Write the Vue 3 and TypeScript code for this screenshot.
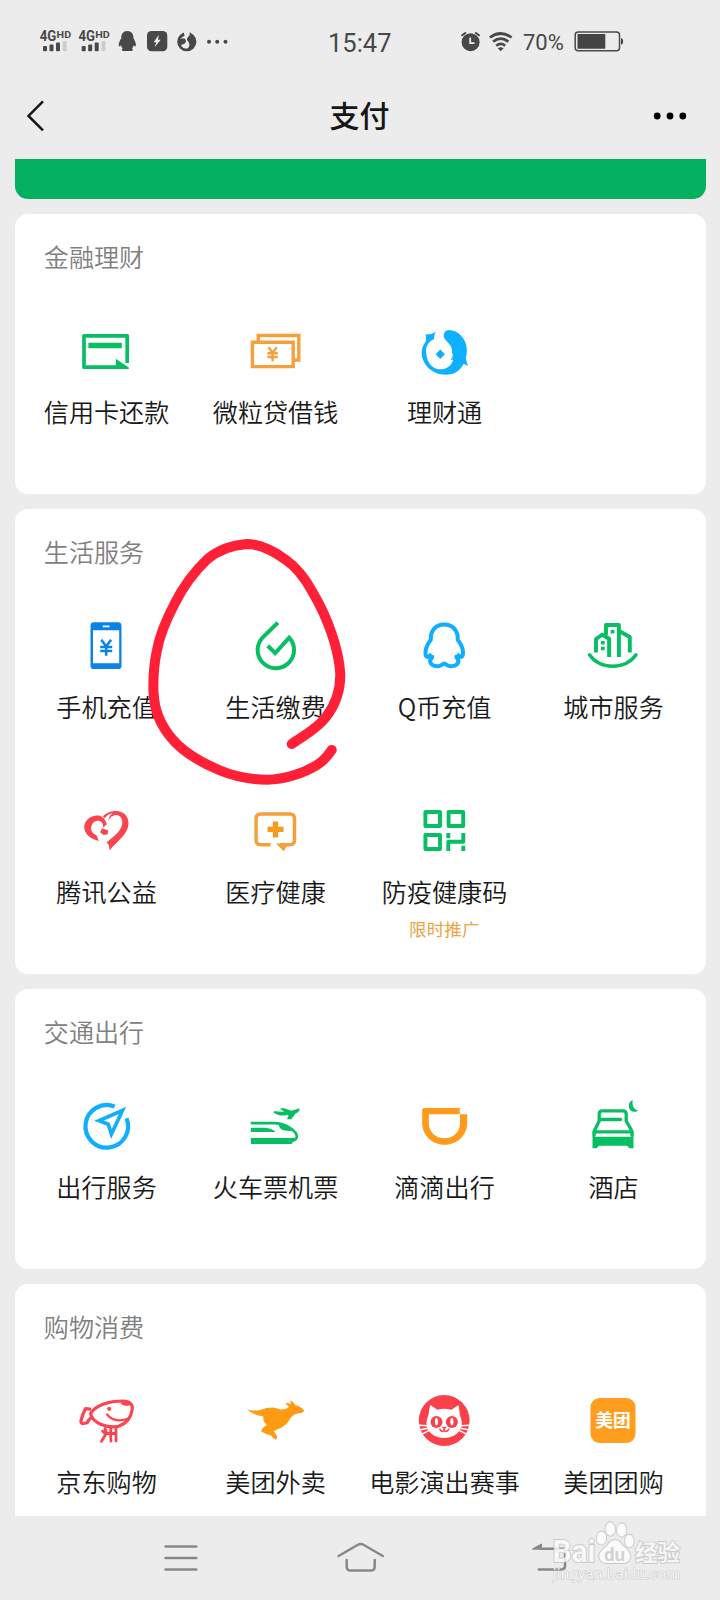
<script setup lang="ts">
interface Service {
  label: string
  icon: string
  note?: string
}
interface Section {
  title: string
  services: Service[]
}

const GREEN = '#07bf62'
const ORANGE = '#f5a03a'
const BLUE = '#10aeff'
const RED = '#fa4450'

const icons: Record<string, string> = {
  card: `<path d="M53.2 43V15.8H10V47.2H48" fill="none" stroke="${GREEN}" stroke-width="3.7" stroke-linejoin="round"/>
    <path d="M14.4 22.8h33.4v5.4H14.4zM41.8 38.8 54.8 47.5V49H41.8z" fill="${GREEN}"/>`,
  bills: `<g fill="none" stroke="${ORANGE}" stroke-width="3.4"><path d="M9.4 22.2h40.8v24.4H9.4zM15.3 20.5v-5h40.5v24.6h-5"/>
    <path d="m25.5 27.2 4.1 5.6 4.1-5.6M29.6 32.5v8.7M24.4 33.2h10.4M24.4 37h10.4" stroke-width="2.4"/></g>`,
  fish: `<path fill="#0fb0ff" d="M13.6 14.3Q19.5 15 24.3 11.6Q22 14 22.1 19C15.5 22.5 13.7 27 14.1 32.5C14.8 42 20 49.3 28 49.3C34.5 49.3 39.5 46 41.2 39.5L38.6 40Q41.5 36.5 40.8 33L40 34Q40.8 28 37.2 24C34.5 20.5 31.7 19 31.7 15.8C31.7 12.8 33.5 10 37 10C46 10.3 54.5 18.5 54.8 29Q55 35 53.8 38.5L55.9 46L51.7 43.7C48 51 42 54.7 34 54.7C20 54.5 9.7 45 9.7 32Q9.9 26 13.8 21.8Q14.5 17.5 13.6 14.3Z"/>
    <path fill="${BLUE}" d="m28.3 29.6 4.6 4.7-4.6 4.7-4.6-4.7z"/>`,
  phone: `<rect x="16.5" y="7.3" width="31" height="46.8" rx="3.4" fill="#0b83e6"/><path fill="#fff" d="M19 15.3h26.2v33H19zM28.8 10.5h6.7v1.7h-6.7z"/>
    <path d="m27.3 24.7 4.9 6.6 4.9-6.6M32.2 31v9.8M26.2 32h12M26.2 36h12" fill="none" stroke="#0b83e6" stroke-width="2.5"/>`,
  drop: `<path d="M33.4 9 18.8 23.4A18.2 18.2 0 1 0 46.2 22.6L32.2 38.2 26.2 32.2" fill="none" stroke="${GREEN}" stroke-width="4" stroke-linecap="square" stroke-linejoin="miter"/>`,
  penguin: `<path d="M32.2 9.6C23.5 9.6 18.2 16 18.8 24.8C14.5 30 12.2 37 14.2 41.3C15.5 42.8 17.5 41 19.5 39.2M19.8 40.5C20.5 42.5 20 43.2 18.8 43.8C16 49 22 51.5 26.5 51.2C29.5 51 31 48.6 32.2 48.6C33.4 48.6 35 51 38 51.2C42.5 51.5 48.5 49 45.7 43.8C44.5 43.2 44 42.5 44.7 40.5M45 39.2C47 41 49 42.8 50.3 41.3C52.3 37 50 30 45.7 24.8C46.3 16 41 9.6 32.2 9.6" fill="none" stroke="${BLUE}" stroke-width="4" stroke-linejoin="round"/>`,
  city: `<g fill="none" stroke="${GREEN}" stroke-width="3.9" stroke-linejoin="round"><path d="M8.5 39.8C19 55 44.5 55 55 39.8" stroke-linecap="round" stroke-width="3.4"/>
    <path d="M15 37.5V24l6.3-4.3 6.8 4V42M25 20V10h12.9V42M38 16l10.8 6v15.6"/></g><path fill="${GREEN}" d="M19.9 25.9h3.8v3.6h-3.8zM19.9 31.7h3.8v3.6h-3.8zM29.6 14.9h3.8v3.6h-3.8z"/>`,
  heart: `<path fill="${RED}" d="M32.8 24.2C31 17.5 27 15.2 22.2 15.5C15.5 16 10 21 10.3 27.5C10.7 34.5 16.5 38.7 24.8 41L22.6 35.4C18 33 16.3 29.8 17.4 26.5C18.4 22.5 21 20.3 24.5 20.8C28 21.3 29.4 24 29.2 27.8Z"/>
    <path fill="${RED}" d="m28.2 28.2 6 2.2-.6 4.2-4.4.2-3.1-2.6z"/>
    <path fill="${RED}" d="M28.8 16.5C32 12.7 38 10.6 43 11C50 11.5 54.5 16.5 54.5 23C54.5 34.5 43 41 36 50.2C34.6 47 35.5 44 32.5 42.5C39 37 47 31.5 48.2 24C49 18.5 46.3 15.3 42.3 14.9C39 14.7 36.2 17 34.2 20.8C34.5 17.5 36.5 14.5 38.8 13.2C35 13.6 32.5 15.2 31 18.2Z"/>`,
  medical: `<path d="M27.5 44.7H17.8q-4.7 0-4.7-4.7V18.7q0-4.7 4.7-4.7h29q4.7 0 4.7 4.7V40q0 4.7-4.7 4.7H37" fill="none" stroke="${ORANGE}" stroke-width="3.5"/>
    <path fill="${ORANGE}" d="M33 43.4H46.2L40.5 51.3z"/><path d="M24.5 29.4h16M32.5 21.4v16" stroke="#f79a1f" stroke-width="5.2"/>`,
  qr: `<g fill="none" stroke="${GREEN}" stroke-width="3.9" stroke-linejoin="round"><path d="M13.4 12h14.6v14H13.4zM36.6 12h14.6v14H36.6zM13.4 35h14.6v14H13.4z"/>
    <path d="M36.3 33v5.2M51.3 33v8.8H36.3V51M51.3 45.7V51"/></g>`,
  compass: `<path d="M40.8 11.6A21.3 21.3 0 1 0 52.5 23.3" fill="none" stroke="${BLUE}" stroke-width="4.2"/>
    <path d="M48.5 15.5 25 25.6 34.2 29.2 37.4 39Z" fill="none" stroke="${BLUE}" stroke-width="3.7" stroke-linejoin="miter"/>`,
  train: `<path d="M7.8 28.2H31C43 28.2 53.8 36.5 53.8 41.5C53.8 44 52 45 49 45.8" fill="none" stroke="${GREEN}" stroke-width="2.7"/>
    <path fill="${GREEN}" d="M7.8 43H52.5L48.5 49H7.8zM7.8 32.7H22Q29 33 32.5 37.1H7.8zM35.8 29.5C36 34 40 36.5 49.5 35.8Q44 31 35.8 29.5zM30.4 17.4Q31.5 15.2 34 16.4L41.2 16.8 36.8 13.8 40.3 12.9 48.5 15.8 56.4 13.2Q57.4 16.4 52.5 18.6L48.3 24.2 44 24.2 45.5 20.1Q35.5 21.6 30.4 17.4z"/>`,
  didi: `<path fill="#ff9a1a" d="M12 13H47.8V19.3H55.2V28C55.2 40 45.5 49.8 32.5 49.8C20 49.8 10.2 40 10.2 28V14.8Q10.2 13 12 13ZM16.8 19.3V28C16.8 37 23.5 43.3 32.5 43.3C41.5 43.3 48 37 48 28V19.3Z"/>`,
  hotel: `<path d="M13.2 40V36L18.2 26V19Q18.2 15.9 21.3 15.9H42Q45.2 15.9 45.2 19V26L50.9 36V40M19 24.5H39.5M13 36.8H51" fill="none" stroke="${GREEN}" stroke-width="3.3" stroke-linecap="round" stroke-linejoin="round"/>
    <path fill="${GREEN}" d="M11.5 36V53.3H15.5L18 50.8H46L48.5 53.3H52.5V36L50.3 41.7H14Z"/><path fill="${GREEN}" d="M51.7 5C44 8.5 48.5 20.8 57.6 15.6C53.2 15.1 50.7 10.4 51.7 5Z"/>`,
  dog: `<g fill="none" stroke="${RED}" stroke-width="3.2" stroke-linecap="round" stroke-linejoin="round"><path d="M16.5 23.5C22 15 35 11 49 11C55.5 11 59 14.5 58.2 19.5C57 28 51.5 34 44.5 36.3C34 38.5 18.5 33.5 16.5 23.5Z"/>
    <path d="M15.8 19.2L11.5 18.6Q8.5 24.5 6.9 31Q6.8 33.8 9.5 33.5L13.2 32.8Q14 30.5 16.8 28"/><path d="M33.2 24.5C38 31 47 31.5 53.8 28.8" stroke-width="2.3"/>
    <path d="M31 38.5l1.5 4.5-5 8.2M37 38l-.5 5 .5 8M42 38V51M32 43.5H41.5M28.5 41l2.5 2.5" stroke-width="2.8"/></g><circle cx="35.2" cy="18.8" r="2.1" fill="${RED}"/><path fill="${RED}" d="M46 13Q52 9.5 58 14.5Q50.5 18 46 13z"/>`,
  kangaroo: `<path fill="#ff9a12" d="M3.5 19.3Q10 21.5 17.5 20Q29 15.5 36.5 19.2Q42 20.5 46.2 16.8L42.3 13.6Q44 12.3 48 14.3L47 10.7Q50.5 11.5 52.2 15.2Q57 15.8 61 20.2Q61 23 55.5 23.2Q50 24 47.3 28.5Q43.5 36.5 33.5 39.8L30.8 41.2L34.2 46.5L33.2 50Q30 48.7 28.2 45.5Q23 44.3 18.5 41.8Q18.3 38 23.8 35Q19.5 31.5 20.4 26.4Q11 25.5 3.5 19.3Z"/>`,
  cat: `<circle cx="32.2" cy="30.5" r="25.4" fill="#fb3f4b"/><path fill="#fff" d="M18.3 15 25.5 19.7Q32.2 18 39.5 19.7L46.5 15Q47.5 20 47.8 25Q52 34 47.8 40.5Q42 48 32.2 48Q22 48 16.5 40.5Q12.3 33.5 16.5 25Q16.8 20 18.3 15Z"/>
    <g fill="#fb3f4b"><circle cx="24.5" cy="32.1" r="6"/><circle cx="39.9" cy="32.1" r="6"/><path d="M29.8 37h5l-2.5 2.8z"/></g><g fill="#fff"><ellipse cx="24.5" cy="31.6" rx="1.6" ry="3.8"/><ellipse cx="39.9" cy="31.6" rx="1.6" ry="3.8"/></g>
    <path d="M32.3 39v1.5M27.5 38.5Q29.5 43 32.3 40.5Q35 43 37 38.5" fill="none" stroke="#fb3f4b" stroke-width="1.6"/>
    <path d="M6.5 35.2l9 .6M8.2 39.8l9-1.8M10.5 43.8l7.5-4M57.9 35.2l-9 .6M56.2 39.8l-9-1.8M53.9 43.8l-7.5-4" stroke="#fff" stroke-width="1.5"/>`,
  meituan: `<rect x="9.5" y="8" width="45" height="45" rx="9" fill="#ff9d1e"/><text x="32" y="36.9" text-anchor="middle" font-size="17.8" font-weight="700" fill="#fff" font-family="'Noto Sans CJK SC', sans-serif">美团</text>`,
}

const sections: Section[] = [
  {
    title: '金融理财',
    services: [
      { label: '信用卡还款', icon: 'card' },
      { label: '微粒贷借钱', icon: 'bills' },
      { label: '理财通', icon: 'fish' },
    ],
  },
  {
    title: '生活服务',
    services: [
      { label: '手机充值', icon: 'phone' },
      { label: '生活缴费', icon: 'drop' },
      { label: 'Q币充值', icon: 'penguin' },
      { label: '城市服务', icon: 'city' },
      { label: '腾讯公益', icon: 'heart' },
      { label: '医疗健康', icon: 'medical' },
      { label: '防疫健康码', icon: 'qr', note: '限时推广' },
    ],
  },
  {
    title: '交通出行',
    services: [
      { label: '出行服务', icon: 'compass' },
      { label: '火车票机票', icon: 'train' },
      { label: '滴滴出行', icon: 'didi' },
      { label: '酒店', icon: 'hotel' },
    ],
  },
  {
    title: '购物消费',
    services: [
      { label: '京东购物', icon: 'dog' },
      { label: '美团外卖', icon: 'kangaroo' },
      { label: '电影演出赛事', icon: 'cat' },
      { label: '美团团购', icon: 'meituan' },
    ],
  },
]
</script>

<template>
  <div class="screen">
    <header class="status">
      <svg class="status-left" width="200" height="28" viewBox="38 28 200 28">
        <g v-for="x in [0, 38.7]" :key="x" :transform="`translate(${x} 0)`" fill="#484848">
          <text x="39.8" y="41.4" font-size="14.5" font-weight="700" textLength="16.5" lengthAdjust="spacingAndGlyphs">4G</text>
          <text x="56.6" y="38" font-size="9.5" font-weight="700" textLength="14.5" lengthAdjust="spacingAndGlyphs">HD</text>
          <rect x="43" y="46" width="4" height="5.2" rx="1" />
          <rect x="49.5" y="44.5" width="4" height="6.7" rx="1" />
          <rect x="56" y="42.5" width="4" height="8.7" rx="1" />
          <rect x="62.7" y="41" width="4" height="10.2" rx="1" fill="#cdcdcd" />
        </g>
        <g fill="#484848">
          <path d="M127.3 31C131.7 31 133.6 34.4 133.5 38.5C135.5 41.4 136.6 45 135.5 46.3C134.9 46.8 134.2 45.7 133.7 45.2Q133.2 47.5 132 48.6Q134.4 51 131 51H123.7Q120.3 51 122.7 48.6Q121.4 47.5 121 45.2C120.5 45.7 119.8 46.8 119.2 46.3C118.1 45 119.2 41.4 121.2 38.5C121.1 34.4 123 31 127.3 31Z" />
          <rect x="147" y="31" width="20.3" height="20.3" rx="4.5" />
          <circle cx="186.8" cy="41.7" r="9.6" />
          <circle cx="209" cy="41.8" r="2" /><circle cx="217.2" cy="41.8" r="2" /><circle cx="225.5" cy="41.8" r="2" />
        </g>
        <path fill="#ececec" d="M158.8 34.8 153.7 42.2H156.2L154.6 47.2 160.7 39.8H158zM183.5 31.5 189 32Q191 34.5 188 37Q185.6 39.5 188.6 42Q190.6 46 187.4 48.6Q182.2 48.8 181 45L184.5 43.8Q187.2 41.6 184.8 38.6L180.3 38.6 184.6 35.7z" />
      </svg>
      <span class="time">15:47</span>
      <svg class="status-mid" width="54" height="28" viewBox="460 28 54 28">
        <g fill="none" stroke="#484848">
          <circle cx="470.6" cy="42.2" r="9" fill="#484848" stroke="none" />
          <path d="M461.5 35.8 466 32.5M479.7 35.8 475.2 32.5" stroke-width="2" />
          <path d="M470.2 37.5V43.2H474.5" stroke="#ececec" stroke-width="1.8" />
          <path d="M489.8 37.5Q500.7 29.5 511.6 37.5M493 41.6Q500.7 35.7 508.4 41.6M496.2 45.7Q500.7 42.2 505.2 45.7" stroke-width="2.7" />
          <path d="M497.8 48.2Q500.7 46.2 503.6 48.2L500.7 51.2z" fill="#484848" stroke="none" />
        </g>
      </svg>
      <span class="percent">70%</span>
      <svg class="battery" width="50" height="28" viewBox="574 28 50 28">
        <rect x="575.2" y="32" width="44.3" height="18.7" rx="3" fill="none" stroke="#484848" stroke-width="1.5" />
        <path d="M577.5 34H605.3V48.8H577.5zM621 38Q623.2 38.5 623.2 41.3Q623.2 44.3 621 44.8z" fill="#444" />
      </svg>
    </header>

    <nav class="topbar">
      <svg width="20" height="34" viewBox="26 98.6 20 34"><path d="M43 101 28.5 115.5 43 130" fill="none" stroke="#161616" stroke-width="2.5" /></svg>
      <h1>支付</h1>
      <svg width="34" height="10" viewBox="653 111 34 10"><circle cx="657.2" cy="116" r="3.4" /><circle cx="670" cy="116" r="3.4" /><circle cx="682.8" cy="116" r="3.4" /></svg>
    </nav>

    <main class="content">
      <div class="banner"></div>
      <section v-for="section in sections" :key="section.title" class="card">
        <h2>{{ section.title }}</h2>
        <div class="grid">
          <div v-for="service in section.services" :key="service.label" class="service">
            <svg class="icon" viewBox="0 0 64 64" v-html="icons[service.icon]"></svg>
            <span class="label">{{ service.label }}</span>
            <span v-if="service.note" class="note">{{ service.note }}</span>
          </div>
        </div>
      </section>
    </main>

    <footer class="navbar">
      <svg width="720" height="84" viewBox="0 1516 720 84" fill="none" stroke="#888" stroke-width="2.5" stroke-linecap="round" stroke-linejoin="round">
        <path d="M165.5 1546.4H196.3M165.5 1557.9H196.3M165.5 1569.4H196.3" />
        <path d="M338.6 1556 357.5 1545Q360.7 1543.2 363.9 1545L382.8 1556M346.7 1560V1566.5Q346.7 1570.6 350.7 1570.6H370.7Q374.7 1570.6 374.7 1566.5V1560" />
        <path d="M540 1548.8H565V1566Q565 1569.4 561.5 1569.4H538.8" /><path d="M533 1549 541.3 1544.3V1549z" fill="#888" stroke-width="1.5" />
      </svg>
    </footer>

    <svg class="scribble" width="210" height="260" viewBox="140 530 210 260">
      <path d="M291.7 744C302 736.5 316 730 326 717C336 704 340.5 691 340.3 674C339 650 328 618 312.5 592C305 578 296 567 286 560C275 552 262 544 247 544C232 545 217 551 207 559.5C195 571 183 587 175 603C166 620 160 634 157 650C154 664 153 679 153.5 692C154.5 711 160 723 169 735C180 750 200 762 219 770C233 776 248 779.5 267 779.7C285 779.5 304 773 317 765Q325 760 331.7 750" fill="none" stroke="#ff2038" stroke-width="10" stroke-linecap="round" stroke-linejoin="round" />
    </svg>

    <svg class="watermark" width="140" height="70" viewBox="548 1518 140 70">
      <g fill="#fff" fill-opacity=".8" stroke="#bdbdbd" stroke-opacity=".7" stroke-width="1.8" paint-order="stroke">
        <text x="552.5" y="1562.3" font-size="31" font-weight="700" textLength="43" lengthAdjust="spacingAndGlyphs">Bai</text>
        <ellipse cx="601.5" cy="1538" rx="4.8" ry="6.6" /><ellipse cx="610.3" cy="1529" rx="4.8" ry="6.8" />
        <ellipse cx="621.6" cy="1530" rx="4.8" ry="6.8" /><ellipse cx="629.3" cy="1541" rx="4.5" ry="6.3" />
        <path d="M614.8 1540Q619.5 1540 622 1545Q630 1551 630.5 1556Q630 1563.5 622 1563H606.5Q599.5 1563 599.2 1556Q600 1550.5 607 1546Q610 1540 614.8 1540Z" />
        <text x="635" y="1561" font-size="22.5" font-weight="700" font-family="'Noto Sans CJK SC', sans-serif">经验</text>
        <text x="553" y="1579.3" font-size="15.5" stroke-width="1.2" textLength="127" lengthAdjust="spacing">jingyan.baidu.com</text>
      </g>
      <text x="604" y="1560.5" font-size="19" font-weight="700" fill="#d2d2d2" textLength="21" lengthAdjust="spacingAndGlyphs">du</text>
    </svg>
  </div>
</template>

<style>
body {
  margin: 0;
  background: #ececec;
}
</style>

<style scoped>
.screen {
  position: relative;
  display: flex;
  flex-direction: column;
  width: 720px;
  height: 1600px;
  overflow: hidden;
  background: #ececec;
  font-family: Roboto, 'Noto Sans CJK SC', sans-serif;
}
.status {
  display: flex;
  align-items: center;
  flex: none;
  height: 84px;
  padding-left: 38px;
  color: #484848;
}
.time {
  width: 64px;
  margin: 2px 68px 0 90px;
  font-size: 25.5px;
  white-space: nowrap;
}
.percent {
  width: 43px;
  margin: 1px 8px 0 9px;
  font-size: 22px;
}
.topbar {
  display: flex;
  align-items: center;
  justify-content: space-between;
  flex: none;
  height: 63px;
  margin-bottom: 12px;
  padding: 0 33px 0 26px;
}
.topbar h1 {
  margin: 3px 0 0 20px;
  font-size: 30px;
  font-weight: 500;
  line-height: 40px;
  color: #161616;
}
.content {
  display: flex;
  flex-direction: column;
  gap: 15px;
  flex: none;
  height: 1357px;
  overflow: hidden;
  padding: 0 14.5px;
}
.banner {
  flex: none;
  height: 40px;
  border-radius: 0 0 13px 13px;
  background: #02b060;
}
.card {
  flex: none;
  box-sizing: border-box;
  padding: 27px 7.3px 0;
  border-radius: 13px;
  background: #fff;
}
h2 {
  margin: 0 0 43px 22px;
  font-size: 25.1px;
  font-weight: 350;
  line-height: 36px;
  color: #808080;
}
.grid {
  display: grid;
  grid-template-columns: repeat(4, 169px);
  grid-auto-rows: 185px;
  margin-bottom: -11px;
}
.service {
  display: flex;
  flex-direction: column;
  align-items: center;
}
.icon {
  flex: none;
  width: 64px;
  height: 64px;
  overflow: visible;
}
.label {
  margin-top: 9px;
  margin-left: 0.5px;
  font-family: 'Noto Sans CJK SC', sans-serif;
  font-size: 25.1px;
  font-weight: 350;
  line-height: 36px;
  color: #191919;
  white-space: nowrap;
}
.note {
  margin-top: 8.5px;
  font-size: 17.6px;
  line-height: 24px;
  color: #eda445;
}
.navbar {
  flex: none;
  height: 84px;
}
.navbar svg {
  display: block;
}
.scribble {
  position: absolute;
  left: 140px;
  top: 530px;
}
.watermark {
  position: absolute;
  left: 548px;
  top: 1518px;
}
</style>
